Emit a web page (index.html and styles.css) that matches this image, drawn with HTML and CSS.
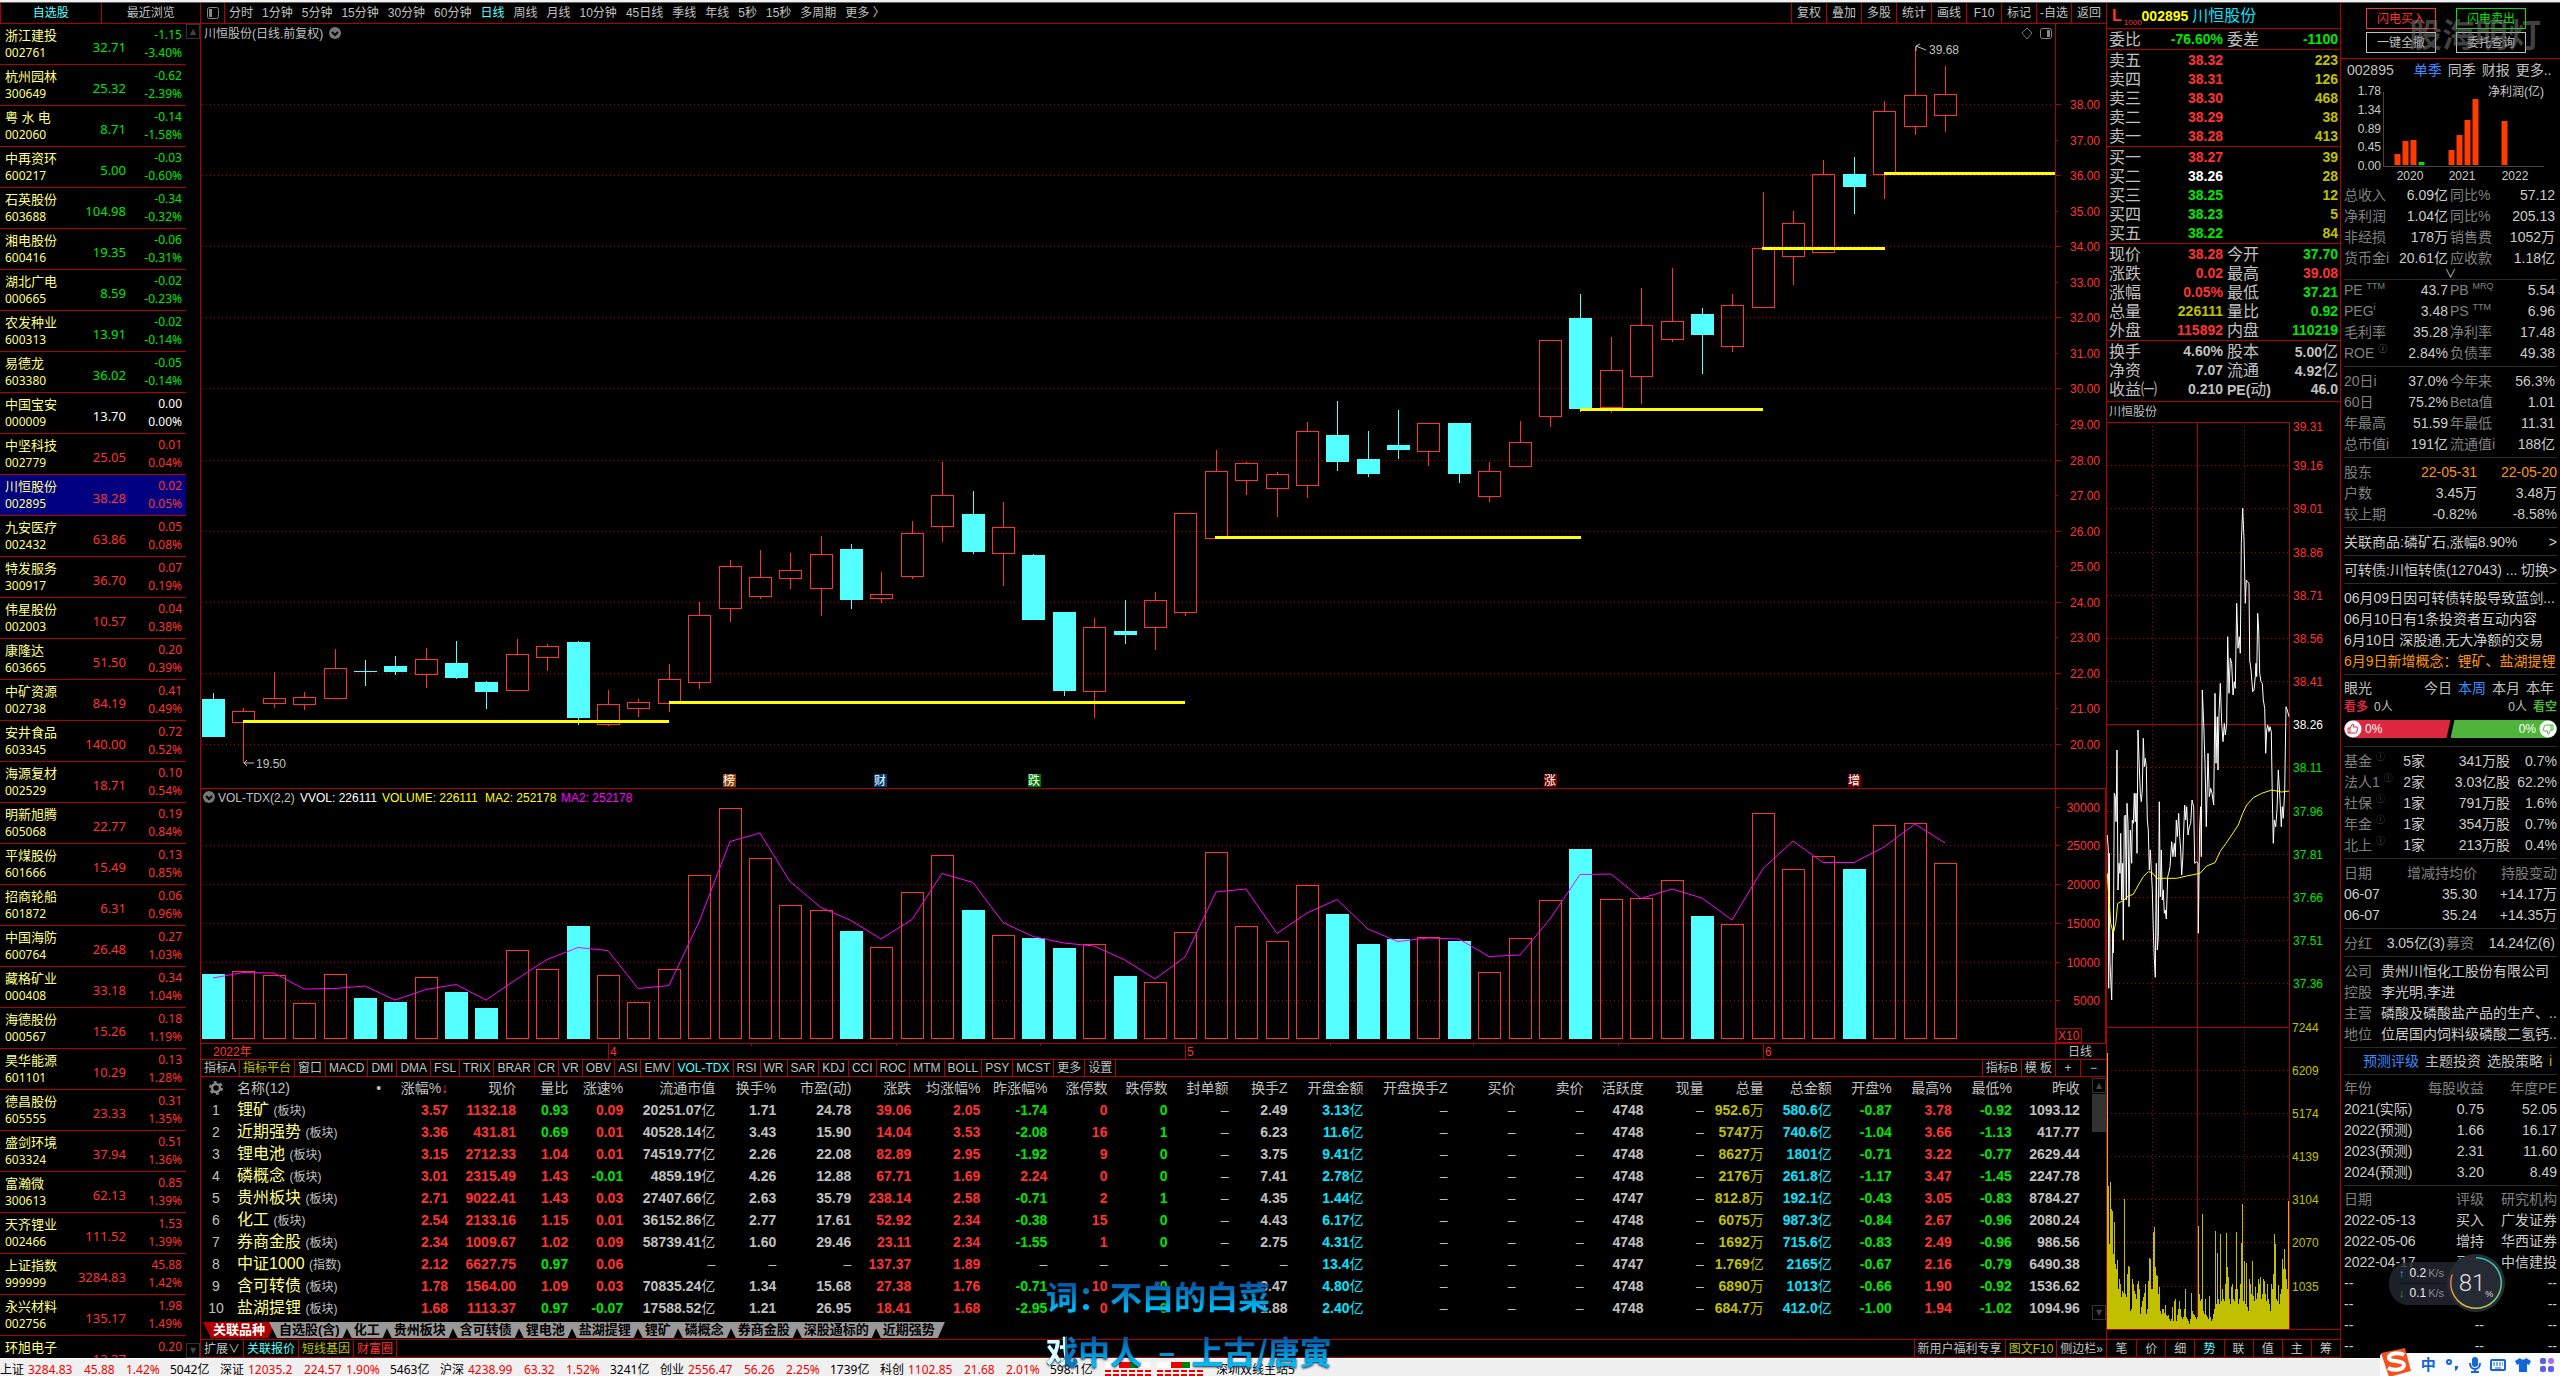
FILE: index.html
```html
<!DOCTYPE html>
<html lang="zh-CN">
<head>
<meta charset="utf-8">
<title>川恒股份 002895</title>
<link rel="stylesheet" href="styles.css">
</head>
<body>
<div class="strip"></div>
<main class="workspace">
  <aside class="watch">
    <nav class="watch-tabs"><button class="on">自选股</button><button>最近浏览</button></nav>
    <div class="watch-body">
      <ul class="watch-list" id="watch"></ul>
      <div class="scroller"><button aria-label="上">▲</button><button aria-label="下">▼</button></div>
    </div>
  </aside>

  <section class="center">
    <nav class="periods">
      <button class="fold" aria-label="侧栏"><svg width="14" height="14" viewBox="0 0 14 14"><rect x="1.500" y="1.500" width="11" height="11" rx="2" fill="none" stroke="#888"/><rect x="3" y="3" width="3" height="8" fill="#888"/></svg></button>
      <div class="period-list">
        <button>分时</button><button>1分钟</button><button>5分钟</button><button>15分钟</button><button>30分钟</button><button>60分钟</button><button class="on">日线</button><button>周线</button><button>月线</button><button>10分钟</button><button>45日线</button><button>季线</button><button>年线</button><button>5秒</button><button>15秒</button><button>多周期</button><button>更多 〉</button>
      </div>
      <div class="tools"><button>复权</button><button>叠加</button><button>多股</button><button>统计</button><button>画线</button><button>F10</button><button>标记</button><button>-自选</button><button>返回</button></div>
    </nav>

    <svg class="kline" id="kline" viewBox="201 24 1905 1035"></svg>

    <nav class="indicators">
      <button>指标A</button><button class="gold">指标平台</button><button>窗口</button><button>MACD</button><button>DMI</button><button>DMA</button><button>FSL</button><button>TRIX</button><button>BRAR</button><button>CR</button><button>VR</button><button>OBV</button><button>ASI</button><button>EMV</button><button class="on">VOL-TDX</button><button>RSI</button><button>WR</button><button>SAR</button><button>KDJ</button><button>CCI</button><button>ROC</button><button>MTM</button><button>BOLL</button><button>PSY</button><button>MCST</button><button>更多</button><button>设置</button>
      <span class="grow"></span>
      <button>指标B</button><button>模 板</button><button class="sign">+</button><button class="sign">−</button>
    </nav>

    <div class="related">
      <table class="grid" id="grid"></table>
      <div class="scroller wide"><button aria-label="上">▲</button><i></i><button aria-label="下">▼</button></div>
    </div>
    <nav class="groups">
      <button class="on">关联品种</button><button>自选股(含)</button><button>化工</button><button>贵州板块</button><button>含可转债</button><button>锂电池</button><button>盐湖提锂</button><button>锂矿</button><button>磷概念</button><button>券商金股</button><button>深股通标的</button><button>近期强势</button>
    </nav>
    <nav class="indicators ext">
      <button>扩展∨</button><button class="on">关联报价</button><button class="gold">短线基因</button><button class="hot">财富圈</button>
      <span class="grow"></span>
      <button>新用户福利专享</button><button class="gold">图文F10</button><button>侧边栏»</button>
    </nav>
  </section>

  <section class="quote">
    <header class="quote-head"><b class="lv">L</b><small>1000</small><b class="code">002895</b><span>川恒股份</span></header>
    <div id="book"></div>
    <h2 class="mini-title">川恒股份</h2>
    <svg class="intraday" id="intraday" viewBox="2107 422 233 917"></svg>
    <nav class="quote-tabs"><button>笔</button><button>价</button><button>细</button><button class="on">势</button><button>联</button><button>值</button><button>主</button><button>筹</button></nav>
  </section>

  <aside class="info">
    <div class="orders">
      <button class="buy">闪电买入</button><button class="sell">闪电卖出</button>
      <button>一键全撤</button><button>委托查询</button>
      <span class="watermark">股海明灯</span>
    </div>
    <nav class="fin-tabs"><span>002895</span><button class="on">单季</button><button>同季</button><button>财报</button><button>更多..</button></nav>
    <svg class="profit" id="profit" viewBox="2341 81 219 104"></svg>
    <section class="sec pairs first">
      <p><label>总收入</label><b>6.09亿</b><label>同比%</label><b>57.12</b></p>
      <p><label>净利润</label><b>1.04亿</b><label>同比%</label><b>205.13</b></p>
      <p><label>非经损</label><b>178万</b><label>销售费</label><b>1052万</b></p>
      <p><label>货币金i</label><b>20.61亿</b><label>应收款</label><b>1.18亿</b></p>
      <button class="unfold" aria-label="展开">∨</button>
    </section>
    <section class="sec pairs tight">
      <p><label>PE <sup>TTM</sup></label><b>43.7</b><label>PB <sup>MRQ</sup></label><b>5.54</b></p>
      <p><label>PEG<sup>i</sup></label><b>3.48</b><label>PS <sup>TTM</sup></label><b>6.96</b></p>
      <p><label>毛利率</label><b>35.28</b><label>净利率</label><b>17.48</b></p>
      <p><label>ROE <sup>ⓘ</sup></label><b>2.84%</b><label>负债率</label><b>49.38</b></p>
    </section>
    <section class="sec pairs">
      <p><label>20日i</label><b>37.0%</b><label>今年来</label><b>56.3%</b></p>
      <p><label>60日</label><b>75.2%</b><label>Beta值</label><b>1.01</b></p>
      <p><label>年最高</label><b>51.59</b><label>年最低</label><b>11.31</b></p>
      <p><label>总市值i</label><b>191亿</b><label>流通值i</label><b>188亿</b></p>
    </section>
    <section class="sec tri">
      <p><label>股东</label><b class="orange">22-05-31</b><b class="orange">22-05-20</b></p>
      <p><label>户数</label><b>3.45万</b><b>3.48万</b></p>
      <p><label>较上期</label><b>-0.82%</b><b>-8.58%</b></p>
    </section>
    <section class="sec"><a class="line" href="#"><span>关联商品:磷矿石,涨幅8.90%</span><i>&gt;</i></a></section>
    <section class="sec"><a class="line" href="#"><span>可转债:川恒转债(127043) ...</span><i>切换&gt;</i></a></section>
    <section class="sec">
      <a class="line" href="#"><span class="clip">06月09日因可转债转股导致蓝剑...</span></a>
      <a class="line" href="#"><span>06月10日有1条投资者互动内容</span></a>
      <a class="line" href="#"><span>6月10日 深股通,无大净额的交易</span></a>
      <a class="line orange" href="#"><span class="clip">6月9日新增概念：锂矿、盐湖提锂</span></a>
    </section>
    <section class="sec vote">
      <nav class="vote-tabs"><span>眼光</span><button>今日</button><button class="on">本周</button><button>本月</button><button>本年</button></nav>
      <div class="vote-n"><b class="up">看多</b><span>0人</span><span class="grow"></span><span>0人</span><b class="down">看空</b></div>
      <div class="vote-bar">
        <span class="bull"><svg width="18" height="18" viewBox="0 0 18 18"><circle cx="9" cy="9" r="8.500" fill="#fff"/><path d="M4 8h2v5H4zM6 8l2.500-4c1.500 0 1.200 1.500.8 3H13c1 0 1 1 .5 2l-1 3.500c-.2.500-.5.500-1 .5H6" fill="none" stroke="#dc2840"/></svg>0%</span>
        <span class="bear">0%<svg width="18" height="18" viewBox="0 0 18 18"><circle cx="9" cy="9" r="8.500" fill="#fff"/><path d="M14 10h-2V5h2zM12 10l-2.500 4c-1.500 0-1.200-1.500-.8-3H5c-1 0-1-1-.5-2l1-3.500c.2-.5.5-.5 1-.5H12" fill="none" stroke="#50b43c"/></svg></span>
      </div>
    </section>
    <section class="sec hold">
      <p><label>基金 <sup>ⓘ</sup></label><b>5家</b><b>341万股</b><b>0.7%</b></p>
      <p><label>法人1 <sup>ⓘ</sup></label><b>2家</b><b>3.03亿股</b><b>62.2%</b></p>
      <p><label>社保 <sup>ⓘ</sup></label><b>1家</b><b>791万股</b><b>1.6%</b></p>
      <p><label>年金 <sup>ⓘ</sup></label><b>1家</b><b>354万股</b><b>0.7%</b></p>
      <p><label>北上 <sup>ⓘ</sup></label><b>1家</b><b>213万股</b><b>0.4%</b></p>
    </section>
    <section class="sec tri">
      <p><label>日期</label><label>增减持均价</label><label>持股变动</label></p>
      <p><b class="l">06-07</b><b>35.30</b><b>+14.17万</b></p>
      <p><b class="l">06-07</b><b>35.24</b><b>+14.35万</b></p>
    </section>
    <section class="sec bonus">
      <p><label>分红</label><b>3.05亿(3)</b><label>募资</label><b>14.24亿(6)</b></p>
    </section>
    <section class="sec corp">
      <p><label>公司</label><span>贵州川恒化工股份有限公司</span></p>
      <p><label>控股</label><span>李光明,李进</span></p>
      <p><label>主营</label><span>磷酸及磷酸盐产品的生产、..</span></p>
      <p><label>地位</label><span>位居国内饲料级磷酸二氢钙..</span></p>
    </section>
    <section class="sec close"><nav class="rate-tabs"><button class="on">预测评级</button><button>主题投资</button><button>选股策略</button><i>i</i></nav></section>
    <section class="sec close tri eps">
      <p><label>年份</label><label>每股收益</label><label>年度PE</label></p>
      <p><b class="l">2021(实际)</b><b>0.75</b><b>52.05</b></p>
      <p><b class="l">2022(预测)</b><b>1.66</b><b>16.17</b></p>
      <p><b class="l">2023(预测)</b><b>2.31</b><b>11.60</b></p>
      <p><b class="l">2024(预测)</b><b>3.20</b><b>8.49</b></p>
    </section>
    <section class="sec tri eps last">
      <p><label>日期</label><label>评级</label><label>研究机构</label></p>
      <p><b class="l">2022-05-13</b><b>买入</b><b>广发证券</b></p>
      <p><b class="l">2022-05-06</b><b>增持</b><b>华西证券</b></p>
      <p><b class="l">2022-04-17</b><b>买入</b><b>中信建投</b></p>
      <p><b class="l">--</b><b>--</b><b>--</b></p>
      <p><b class="l">--</b><b>--</b><b>--</b></p>
      <p><b class="l">--</b><b>--</b><b>--</b></p>
      <p><b class="l">--</b><b>--</b><b>--</b></p>
    </section>
  </aside>
</main>

<footer class="status" id="status"></footer>

<div class="lyrics"><p>词：不白的白菜</p><p><span class="sung">戏</span>中人&ensp;–&ensp;上古/唐寅</p></div>

<div class="speed">
  <div class="rates"><p><i class="u">↑</i><b>0.2</b>K/s</p><p><i class="d">↓</i><b>0.1</b>K/s</p></div>
  <div class="ball"><div><span>81</span><small>%</small></div></div>
</div>

<div class="ime">
  <svg class="sogou" width="32" height="28" viewBox="0 0 32 28"><path d="M1 5L25 0l6 23-22 6z" fill="#f4511e"/><path d="M24 7c-5-3-15-2-15 3 0 4 15 2 15 7 0 5-11 6-16 3" fill="none" stroke="#fff" stroke-width="4"/></svg>
  <b>中</b>
  <svg width="14" height="14" viewBox="0 0 14 14"><circle cx="4" cy="4" r="2" fill="none" stroke="#1565d8" stroke-width="2"/><path d="M10 8h3c0 3-1 4-3 5z" fill="#1565d8"/></svg>
  <svg width="14" height="16" viewBox="0 0 14 16"><rect x="4" y="0" width="6" height="10" rx="3" fill="#1565d8"/><path d="M2 6c0 8 10 8 10 0M7 12v3M3 15h8" fill="none" stroke="#1565d8" stroke-width="2"/></svg>
  <svg width="16" height="14" viewBox="0 0 16 14"><rect x="1" y="2" width="14" height="10" rx="1" fill="none" stroke="#1565d8" stroke-width="2"/><path d="M3 5h10M3 7h10" stroke="#1565d8" stroke-dasharray="2 1"/><path d="M5 10h6" stroke="#1565d8"/></svg>
  <svg width="16" height="14" viewBox="0 0 16 14"><path d="M5 0c1 2 5 2 6 0l5 3-2 4-2-1v8H4V6L2 7 0 3z" fill="#1565d8"/></svg>
  <svg width="14" height="14" viewBox="0 0 14 14"><g fill="#5b5fe8"><rect width="6" height="6" rx="2"/><rect y="8" width="6" height="6" rx="2"/><rect x="8" y="8" width="6" height="6" rx="2"/></g><circle cx="11" cy="3" r="3" fill="#a26bf0"/></svg>
</div>
<script src="app.js"></script>
</body>
</html>
```
FILE: styles.css
```css
:root {
  --line: #b00000;
  --red: #ff3232;
  --green: #00e600;
  --cyan: #54ffff;
  --aqua: #00e6ff;
  --text: #c0c0c0;
  --gold: #c0c000;
}
* { box-sizing: border-box; }
body {
  margin: 0;
  height: 100vh;
  display: flex;
  flex-direction: column;
  overflow: hidden;
  background: #000;
  color: var(--text);
  font: 12px/16px "Liberation Sans", "Noto Sans CJK SC", sans-serif;
}
button { margin: 0; padding: 0; border: 0; background: none; color: inherit; font: inherit; white-space: nowrap; }
p, ul, h2 { margin: 0; padding: 0; font: inherit; list-style: none; }
i { font-style: normal; }
.grow { flex: 1; }
.on { color: var(--cyan); }
.gold { color: var(--gold); }
.hot, .red { color: var(--red); }
.green { color: var(--green); }
.white { color: #fff; }
.aqua { color: var(--aqua); }
.orange { color: #ff9600; }

.strip { height: 3px; background: #f0f0f0; border-bottom: 1px solid #666; flex: none; }
.workspace { flex: 1; min-height: 0; display: flex; }

/* watch list */
.watch { width: 201px; flex: none; border-right: 1px solid var(--line); display: flex; flex-direction: column; }
.watch-tabs { height: 21px; flex: none; display: grid; grid-template-columns: 1fr 1fr; border-bottom: 1px solid var(--line); border-left: 1px solid var(--line); }
.watch-tabs button + button { border-left: 1px solid var(--line); }
.watch-body { flex: 1; min-height: 0; display: flex; }
.watch-list { flex: 1; overflow: hidden; font: 12px/18px "Noto Sans", "Noto Sans CJK SC", sans-serif; }
.watch-list li { height: 41px; display: grid; grid-template-columns: 60px 1fr 56px; padding: 2px 4px 2px 5px; border-bottom: 1px solid var(--line); text-align: right; }
.watch-list li.sel { background: #000080; }
.watch-list .n { color: #ffff84; text-align: left; }
.watch-list .n b { font-weight: 400; font-size: 13px; white-space: pre; }
.watch-list span { display: flex; flex-direction: column; }
.watch-list .p { font-size: 13px; line-height: 42px; }
.scroller { width: 14px; flex: none; display: flex; flex-direction: column; justify-content: space-between; }
.scroller button { height: 15px; border: 1px solid #333; color: #444; font: 8px/12px "DejaVu Sans", sans-serif; }

/* toolbar */
.center { flex: 1; min-width: 0; display: flex; flex-direction: column; overflow: hidden; }
.periods { height: 21px; flex: none; display: flex; border-bottom: 1px solid var(--line); }
.fold { width: 24px; border-right: 1px solid var(--line); display: grid; place-items: center; }
.period-list { flex: 1; display: flex; gap: 9px; padding-left: 4px; }
.tools { display: flex; }
.tools button { width: 35px; border-left: 1px solid var(--line); }
.kline { display: block; width: 100%; flex: none; }
svg text { fill: var(--text); }

.indicators { height: 18px; flex: none; display: flex; border-top: 1px solid var(--line); border-bottom: 1px solid var(--line); }
.indicators button { padding: 0 3px; border-right: 1px solid var(--line); }
.indicators .grow { border-right: 1px solid var(--line); }
.indicators .sign { width: 25px; }
.indicators button:last-child { border-right: 0; }
.ext { height: 19px; }

/* related instruments */
.related { flex: 1; min-height: 0; display: flex; padding-bottom: 2px; }
.grid { flex: 1; width: 100%; table-layout: fixed; border-collapse: collapse; align-self: flex-start; white-space: nowrap; }
.grid tr { height: 22px; }
.grid th, .grid td { padding: 0; text-align: right; font-size: 14px; line-height: 20px; overflow: visible; }
.grid th { font-weight: 400; }
.grid td { font-weight: 700; }
.grid td i { font-weight: 400; }
.grid .idx { text-align: center; font-weight: 400; }
.grid .idx svg { display: block; margin: 0 auto; }
.grid .name { text-align: left; padding-left: 6px; }
.grid td.name { color: #ffff84; font-weight: 400; font-size: 16px; }
.grid .name small { color: var(--text); font-size: 12px; }
.grid .name em { float: right; font-style: normal; }
.scroller.wide { justify-content: flex-start; padding-top: 1px; }
.scroller.wide i { height: 38px; margin-top: 1px; background: #323232; }
.scroller.wide button:last-child { margin-top: auto; }

.groups { height: 17px; flex: none; display: flex; padding-left: 2px; }
.groups button { padding: 0 10px; margin-right: -6px; height: 16px; background: #989898; color: #000; font-size: 13px; font-weight: 700; clip-path: polygon(0 0, 100% 0, calc(100% - 7px) 100%, 8px 100%); }
.groups .on { background: #b00000; color: #fff; }

/* order book */
.quote { width: 235px; flex: none; border-left: 1px solid var(--line); border-right: 1px solid var(--line); display: flex; flex-direction: column; overflow: hidden; }
.quote-head { height: 26px; flex: none; display: flex; align-items: center; padding-left: 5px; border-bottom: 1px solid var(--line); font-size: 16px; color: var(--aqua); }
.quote-head .lv { color: var(--red); }
.quote-head small { color: var(--red); font-size: 8px; align-self: flex-end; line-height: 10px; margin-left: 2px; }
.quote-head .code { color: #ff0; font-size: 14px; margin-right: 4px; }
.book { padding: 1px 2px 0; border-bottom: 1px solid var(--line); }
.book.roomy { padding-bottom: 2px; }
.book p { display: grid; grid-template-columns: 48px 66px 1fr 1fr; height: 19px; font-size: 16px; line-height: 19px; white-space: nowrap; }
.book b { text-align: right; font-size: 14px; }
.book b i { font-weight: 400; font-size: 16px; }
.book label + b + label { padding-left: 4px; }
.mini-title { height: 20px; flex: none; padding: 2px; }
.intraday { display: block; width: 100%; flex: none; }
.quote-tabs { flex: 1; display: grid; grid-template-columns: repeat(8, 1fr); border-top: 1px solid var(--line); border-bottom: 1px solid var(--line); }
.quote-tabs button + button { border-left: 1px solid var(--line); }

/* company info */
.info { width: 219px; flex: none; overflow: hidden; font-size: 14px; line-height: 21px; }
.info .on { color: #3c8cff; }
.orders { position: relative; display: grid; grid-template-columns: 70px 70px; gap: 3px 20px; padding: 5px 0 5px 25px; border-bottom: 1px solid var(--line); font-size: 12px; }
.orders button { height: 21px; border: 1px solid currentColor; line-height: 18px; }
.buy { color: var(--red); }
.sell { color: var(--green); }
.watermark { position: absolute; left: 68px; top: 14px; font-size: 33px; line-height: 38px; font-weight: 700; color: rgb(130 130 130 / 50%); }
.fin-tabs { display: flex; gap: 6px; padding: 1px 0 0 6px; white-space: nowrap; }
.fin-tabs span { margin-right: 14px; }
.profit { display: block; width: 100%; }
.sec { margin: 0 3px; padding: 4px 0 2px; border-bottom: 1px solid #2c2c2c; white-space: nowrap; }
.sec.first { padding: 0; }
.sec.tight { padding-top: 0; }
.sec.close { padding: 3px 0 2px; }
.sec.last { border: 0; padding-top: 3px; }
.sec p { display: grid; height: 21px; }
.sec b { font-weight: 400; text-align: right; color: #ccc; }
.sec b.l { text-align: left; }
.sec b.orange { color: #ff9600; }
.sec label { color: #808080; }
.sec sup { font-size: 9px; line-height: 9px; }
.pairs p { grid-template-columns: 50px 52px 49px 1fr; column-gap: 2px; padding-right: 2px; }
.unfold { display: block; margin: 0 auto; font-size: 12px; line-height: 10px; height: 10px; }
.tri p { grid-template-columns: 48px 85px 1fr; }
.tri label + label { text-align: right; }
.eps p { grid-template-columns: 76px 64px 1fr; }
.line { display: flex; justify-content: space-between; color: #ccc; text-decoration: none; height: 21px; }
.line.orange { color: #ff9600; }
.line span { overflow: hidden; text-overflow: ellipsis; }
.line .clip { text-overflow: clip; }
.line i { flex: none; }
.vote-tabs { display: flex; gap: 6px; padding-right: 3px; }
.vote-tabs span { flex: 1; }
.vote-n { display: flex; gap: 6px; font-size: 12px; line-height: 16px; height: 21px; }
.vote-n .up { color: #dc2840; font-weight: 700; }
.vote-n .down { color: #50b43c; font-weight: 700; }
.vote-bar { display: flex; font-size: 12px; color: #fff; line-height: 18px; margin-bottom: 6px; }
.vote-bar span { flex: 1; display: flex; gap: 3px; height: 18px; }
.vote-bar .bull { background: #dc2840; border-radius: 9px 0 0 9px; clip-path: polygon(0 0, 100% 0, calc(100% - 4px) 100%, 0 100%); }
.vote-bar .bear { background: #50b43c; border-radius: 0 9px 9px 0; justify-content: flex-end; clip-path: polygon(4px 0, 100% 0, 100% 100%, 0 100%); }
.vote { padding-top: 3px; }
.hold p { grid-template-columns: 54px 27px 1fr 47px; }
.hold sup { color: #555; }
.bonus p { grid-template-columns: 28px 72px 1fr 80px; column-gap: 1px; padding-right: 2px; }
.corp p { grid-template-columns: 37px 1fr; }
.corp span { overflow: hidden; color: #ccc; }
.rate-tabs { display: flex; gap: 6px; padding-left: 19px; }
.rate-tabs i { color: var(--gold); }

/* status bar */
.status { height: 18px; flex: none; display: flex; background: #f0f0f0; border-top: 1px solid #fff; color: #000; font: 12px/22px "Noto Sans", "Noto Sans CJK SC", sans-serif; white-space: nowrap; overflow: hidden; }
.status .mk { display: grid; grid-template-columns: 28px 56px 42px 44px 50px; }
.status .mk .r { color: #f00000; }
.status .site { margin-left: 12px; }
.status svg { margin-left: 4px; }

/* floating windows */
.lyrics { position: absolute; left: 1046px; bottom: 0; font: 700 32px/56px "Noto Sans CJK SC", sans-serif; white-space: pre; filter: drop-shadow(0 1px 1px #001830); pointer-events: none; }
.lyrics p { background: linear-gradient(#0a50a0 25%, #00b8f4 75%); background-clip: text; -webkit-background-clip: text; color: transparent; line-height: 52px; }
.lyrics p + p { margin-top: 3px; }
.sung { background: linear-gradient(90deg, #dff 60%, #0878c0 60%); background-clip: text; -webkit-background-clip: text; }
.speed { position: absolute; right: 55px; bottom: 64px; display: flex; align-items: center; pointer-events: none; }
.rates { width: 80px; margin-right: -22px; padding: 2px 0 2px 10px; border-radius: 20px 0 0 20px; background: rgb(36 40 50 / 80%); color: #888; font-size: 11px; line-height: 19px; }
.rates p + p { border-top: 1px solid #14161c; }
.rates b { color: #eee; margin: 0 2px 0 5px; font-size: 12px; font-weight: 400; }
.rates .u { color: #30a8e8; }
.rates .d { color: #20b030; }
.ball { width: 58px; height: 58px; padding: 3px; border-radius: 50%; background: #262a34; }
.ball div { width: 52px; height: 52px; border-radius: 50%; display: flex; align-items: center; justify-content: center; background: radial-gradient(#262a34 24px, transparent 25px), conic-gradient(#30c8b8, #50d898 25%, #e0d040 55%, #f07840 80%, #262a34 81%); color: #ddd; }
.ball span { font: 300 24px/48px Roboto, sans-serif; }
.ball small { font-size: 9px; align-self: flex-end; line-height: 30px; }
.ime { position: absolute; right: 0; bottom: 0; height: 23px; display: flex; align-items: center; justify-content: space-between; width: 180px; padding-right: 6px; background: #f8fbff; border-radius: 4px 0 0 0; }
.ime b { color: #1565d8; font-size: 15px; }
.sogou { margin-top: -5px; }
```
FILE: app.js
```js
const NS = 'http://www.w3.org/2000/svg';
const RED = '#ff3232', LINE = '#b00000', CYAN = '#54ffff';

function el(svg, tag, attrs, text) {
  const n = document.createElementNS(NS, tag);
  for (const k in attrs) n.setAttribute(k, attrs[k]);
  if (text !== undefined) n.textContent = text;
  svg.append(n);
  return n;
}
const seg = (s, x1, y1, x2, y2, c = LINE, w = 1, dash) =>
  el(s, 'path', { d: `M${x1} ${y1}L${x2} ${y2}`, stroke: c, 'stroke-width': w, fill: 'none', 'shape-rendering': 'crispEdges', ...(dash ? { 'stroke-dasharray': dash } : {}) });
const label = (s, x, y, t, c, size = 12, anchor = 'start') =>
  el(s, 'text', { x, y, 'font-size': size, 'text-anchor': anchor, style: `fill:${c}` }, t);

/* watch list: name, code, price, change, percent */
const watch = `浙江建投,002761,32.71,-1.15,-3.40%
杭州园林,300649,25.32,-0.62,-2.39%
粤 水 电,002060,8.71,-0.14,-1.58%
中再资环,600217,5.00,-0.03,-0.60%
石英股份,603688,104.98,-0.34,-0.32%
湘电股份,600416,19.35,-0.06,-0.31%
湖北广电,000665,8.59,-0.02,-0.23%
农发种业,600313,13.91,-0.02,-0.14%
易德龙,603380,36.02,-0.05,-0.14%
中国宝安,000009,13.70,0.00,0.00%
中坚科技,002779,25.05,0.01,0.04%
川恒股份,002895,38.28,0.02,0.05%
九安医疗,002432,63.86,0.05,0.08%
特发服务,300917,36.70,0.07,0.19%
伟星股份,002003,10.57,0.04,0.38%
康隆达,603665,51.50,0.20,0.39%
中矿资源,002738,84.19,0.41,0.49%
安井食品,603345,140.00,0.72,0.52%
海源复材,002529,18.71,0.10,0.54%
明新旭腾,605068,22.77,0.19,0.84%
平煤股份,601666,15.49,0.13,0.85%
招商轮船,601872,6.31,0.06,0.96%
中国海防,600764,26.48,0.27,1.03%
藏格矿业,000408,33.18,0.34,1.04%
海德股份,000567,15.26,0.18,1.19%
昊华能源,601101,10.29,0.13,1.28%
德昌股份,605555,23.33,0.31,1.35%
盛剑环境,603324,37.94,0.51,1.36%
富瀚微,300613,62.13,0.85,1.39%
天齐锂业,002466,111.52,1.53,1.39%
上证指数,999999,3284.83,45.88,1.42%
永兴材料,002756,135.17,1.98,1.49%
环旭电子,601231,13.37,0.20,1.52%`.split('\n').map(r => r.split(','));
document.getElementById('watch').innerHTML = watch.map(([n, c, p, d, r]) => {
  const cls = +d < 0 ? 'green' : +d > 0 ? 'red' : 'white';
  return `<li class="${cls}${c === '002895' ? ' sel' : ''}"><span class="n"><b>${n}</b>${c}</span><span class="p">${p}</span><span><i>${d}</i><i>${r}</i></span></li>`;
}).join('');

/* related instruments */
const heads = '名称(12)|涨幅%|现价|量比|涨速%|流通市值|换手%|市盈(动)|涨跌|均涨幅%|昨涨幅%|涨停数|跌停数|封单额|换手Z|开盘金额|开盘换手Z|买价|卖价|活跃度|现量|总量|总金额|开盘%|最高%|最低%|昨收'.split('|');
const widths = [30, 150, 67, 68, 52, 55, 92, 61, 75, 60, 69, 67, 60, 60, 61, 59, 76, 84, 68, 68, 60, 60, 60, 68, 60, 60, 60, 68, 12];
const rows = `锂矿 (板块)|3.57|1132.18|0.93|0.09|20251.07亿|1.71|24.78|39.06|2.05|-1.74|0|0|–|2.49|3.13亿|–|–|–|4748|–|952.6万|580.6亿|-0.87|3.78|-0.92|1093.12
近期强势 (板块)|3.36|431.81|0.69|0.01|40528.14亿|3.43|15.90|14.04|3.53|-2.08|16|1|–|6.23|11.6亿|–|–|–|4748|–|5747万|740.6亿|-1.04|3.66|-1.13|417.77
锂电池 (板块)|3.15|2712.33|1.04|0.01|74519.77亿|2.26|22.08|82.89|2.95|-1.92|9|0|–|3.75|9.41亿|–|–|–|4748|–|8627万|1801亿|-0.71|3.22|-0.77|2629.44
磷概念 (板块)|3.01|2315.49|1.43|-0.01|4859.19亿|4.26|12.88|67.71|1.69|2.24|0|0|–|7.41|2.78亿|–|–|–|4748|–|2176万|261.8亿|-1.17|3.47|-1.45|2247.78
贵州板块 (板块)|2.71|9022.41|1.43|0.03|27407.66亿|2.63|35.79|238.14|2.58|-0.71|2|1|–|4.35|1.44亿|–|–|–|4747|–|812.8万|192.1亿|-0.43|3.05|-0.83|8784.27
化工 (板块)|2.54|2133.16|1.15|0.01|36152.86亿|2.77|17.61|52.92|2.34|-0.38|15|0|–|4.43|6.17亿|–|–|–|4748|–|6075万|987.3亿|-0.84|2.67|-0.96|2080.24
券商金股 (板块)|2.34|1009.67|1.02|0.09|58739.41亿|1.60|29.46|23.11|2.34|-1.55|1|0|–|2.75|4.31亿|–|–|–|4748|–|1692万|715.6亿|-0.83|2.49|-0.96|986.56
中证1000 (指数)|2.12|6627.75|0.97|0.06|–|–|–|137.37|1.89|–|–|–|–|–|13.4亿|–|–|–|4747|–|1.769亿|2165亿|-0.67|2.16|-0.79|6490.38
含可转债 (板块)|1.78|1564.00|1.09|0.03|70835.24亿|1.34|15.68|27.38|1.76|-0.71|10|0|–|3.47|4.80亿|–|–|–|4748|–|6890万|1013亿|-0.66|1.90|-0.92|1536.62
盐湖提锂 (板块)|1.68|1113.37|0.97|-0.07|17588.52亿|1.21|26.95|18.41|1.68|-2.95|0|0|–|1.88|2.40亿|–|–|–|4748|–|684.7万|412.0亿|-1.00|1.94|-1.02|1094.96`.split('\n').map(r => r.split('|'));
const signed = [1, 4, 8, 9, 10, 23, 24, 25];
function tone(i, v) {
  if (v === '–') return '';
  if (signed.includes(i)) return v[0] === '-' ? 'green' : 'red';
  if (i === 2 || i === 11) return 'red';
  if (i === 3) return +v < 1 ? 'green' : 'red';
  if (i === 12) return 'green';
  if (i === 15 || i === 22) return 'aqua';
  return i === 21 ? 'gold' : '';
}
const gear = '<svg width="14" height="14" viewBox="0 0 14 14"><circle cx="7" cy="7" r="4" fill="none" stroke="#888" stroke-width="2.500"/><circle cx="7" cy="7" r="6" fill="none" stroke="#888" stroke-width="2" stroke-dasharray="3 3.280"/></svg>';
document.getElementById('grid').innerHTML =
  `<colgroup>${widths.map(w => `<col style="width:${w}px">`).join('')}</colgroup><thead><tr><th class="idx">${gear}</th>` +
  heads.map((h, i) => `<th class="${i ? '' : 'name'}">${h}${i ? '' : '<em>•</em>'}${i === 1 ? '<span class="red">↓</span>' : ''}</th>`).join('') +
  '<th></th></tr></thead><tbody>' +
  rows.map((r, n) => `<tr><td class="idx">${n + 1}</td>` + r.map((v, i) => i
    ? `<td class="${tone(i, v)}">${v.replace(/[亿万–]/, '<i>$&</i>')}</td>`
    : `<td class="name">${v.replace(/\(.*\)/, '<small>$&</small>')}</td>`).join('') + '<td></td></tr>').join('') + '</tbody>';

/* order book */
const book = [
  [['委比', '-76.60%', 'green', '委差', '-1100', 'green']],
  [['卖五', '38.32', 'red', '', '223', 'gold'], ['卖四', '38.31', 'red', '', '126', 'gold'], ['卖三', '38.30', 'red', '', '468', 'gold'], ['卖二', '38.29', 'red', '', '38', 'gold'], ['卖一', '38.28', 'red', '', '413', 'gold']],
  [['买一', '38.27', 'red', '', '39', 'gold'], ['买二', '38.26', 'white', '', '28', 'gold'], ['买三', '38.25', 'green', '', '12', 'gold'], ['买四', '38.23', 'green', '', '5', 'gold'], ['买五', '38.22', 'green', '', '84', 'gold']],
  [['现价', '38.28', 'red', '今开', '37.70', 'green'], ['涨跌', '0.02', 'red', '最高', '39.08', 'red'], ['涨幅', '0.05%', 'red', '最低', '37.21', 'green'], ['总量', '226111', 'gold', '量比', '0.92', 'green'], ['外盘', '115892', 'red', '内盘', '110219', 'green']],
  [['换手', '4.60%', '', '股本', '5.00亿', ''], ['净资', '7.07', '', '流通', '4.92亿', ''], ['收益㈠', '0.210', '', '<b>PE(</b>动<b>)</b>', '46.0', '']]
];
document.getElementById('book').innerHTML = book.map((g, n) => `<div class="book${n === 4 ? ' roomy' : ''}">` + g.map(r =>
  `<p><label>${r[0]}</label><b class="${r[2]}">${r[1]}</b><label>${r[3]}</label><b class="${r[5]}">${r[4].replace('亿', '<i>亿</i>')}</b></p>`).join('') + '</div>').join('');

/* daily candles: fall flag, high, body top, body bottom, low, volume top */
const K = [[1,693,699,737,737,974],[0,708,711,722,763,971],[0,672,698,703,708,975],[0,692,697,704,710,1003],[0,649,668,698,698,974],[1,660,671,672,686,998],[1,656,666,672,675,1002],[0,648,659,674,688,977],[1,641,663,678,679,992],[1,681,682,692,709,1008],[0,639,654,690,691,950],[0,644,646,657,671,969],[1,641,642,718,725,926],[0,690,704,724,726,975],[0,699,702,708,717,1002],[0,664,679,703,712,969],[0,602,615,682,689,875],[0,560,566,608,622,808],[0,550,577,596,599,858],[0,553,570,578,589,905],[0,536,554,588,616,910],[1,544,549,600,609,931],[0,572,594,598,603,947],[0,521,533,576,579,892],[0,462,495,526,542,855],[1,491,514,552,554,910],[0,502,527,553,586,935],[1,554,555,620,620,938],[1,612,612,691,696,948],[0,618,627,691,718,944],[1,600,631,635,644,976],[0,592,600,627,650,982],[0,513,513,612,616,932],[0,450,471,538,538,852],[0,462,463,480,495,926],[0,472,474,488,517,941],[0,422,431,485,498,885],[1,401,435,462,471,914],[1,431,459,474,477,944],[1,410,445,450,459,939],[0,423,423,451,466,937],[1,423,423,474,483,941],[0,462,471,496,502,972],[0,421,442,466,466,938],[0,340,340,416,427,900],[1,294,318,409,412,849],[0,337,370,407,413,899],[0,288,325,376,404,898],[0,268,321,339,342,880],[1,308,314,335,374,916],[0,294,305,346,352,924],[0,192,248,307,307,813],[0,211,223,256,285,869],[0,160,174,252,252,856],[1,157,174,187,214,869],[0,101,111,174,199,825],[0,47,95,126,135,823],[0,66,94,115,132,863]];
const cx = i => Math.round(213 + i * 30.386);
const k = document.getElementById('kline');

for (let p = 20; p <= 38; p++) {
  const y = Math.round(104 + (38 - p) * 35.55) + .5;
  if (p % 2 === 0) seg(k, 202, y, 2054, y, LINE, 1, '1 3');
  seg(k, 2055, y, p % 2 ? 2058 : 2061, y);
  label(k, 2070, y + 4, p.toFixed(2), RED);
}
for (let v = 1; v <= 6; v++) {
  const y = Math.round(1039 - v * 38.75) + .5;
  if (v < 6) seg(k, 202, y, 2054, y, LINE, 1, '1 3');
  seg(k, 2055, y, 2060, y);
  label(k, 2100, y + 4, String(v * 5000), RED, 12, 'end');
}
K.forEach(([fall, hi, top, bot, lo, vt], i) => {
  const x = cx(i), c = fall ? CYAN : RED;
  const box = (y, h) => el(k, 'rect', fall
    ? { x: x - 11, y, width: 23, height: Math.max(h, 1), fill: CYAN }
    : { x: x - 10.5, y: y + .5, width: 22, height: Math.max(h, 1), fill: 'none', stroke: RED, 'shape-rendering': 'crispEdges' });
  if (hi < top) seg(k, x + .5, hi, x + .5, top, c);
  if (lo > bot) seg(k, x + .5, bot, x + .5, lo, c);
  box(top, bot - top);
  box(vt, 1039 - vt - (fall ? 0 : 1));
});
el(k, 'polyline', { points: K.map((r, i) => `${cx(i)},${i ? (r[5] + K[i - 1][5]) / 2 : 978}`).join(' '), fill: 'none', stroke: '#ff00ff' });
[[243, 669, 721], [669, 1185, 702], [1215, 1581, 537], [1580, 1763, 409], [1762, 1885, 248], [1884, 2055, 173]].forEach(([a, b, y]) => seg(k, a, y + .5, b, y + .5, '#ffff00', 3));
seg(k, 2055.5, 24, 2055.5, 1059);
seg(k, 201, 788.5, 2106, 788.5);
seg(k, 201, 1043.5, 2106, 1043.5);
seg(k, 2105.5, 789, 2105.5, 1043);
[[608, '4'], [1185, '5'], [1763, '6']].forEach(([x, t]) => { seg(k, x + .5, 1043, x + .5, 1059); label(k, x + 2, 1056, t, RED); });
[751, 896, 1040, 1330, 1473, 1618].forEach(x => seg(k, x + .5, 1043, x + .5, 1046));
label(k, 213, 1056, '2022年', RED);
label(k, 2068, 1056, '日线', '#c0c0c0');
el(k, 'rect', { x: 2056.5, y: 1028.5, width: 25, height: 14, fill: 'none', stroke: LINE });
label(k, 2058, 1040, 'X10', RED);
[['榜', 729, '#904000'], ['财', 880, '#003c78'], ['跌', 1034, '#007800'], ['涨', 1550, '#780000'], ['增', 1854, '#780000']].forEach(([t, x, c]) => {
  el(k, 'rect', { x: x - 6, y: 774, width: 13, height: 13, fill: c });
  label(k, x, 785, t, '#fff', 12, 'middle');
});
el(k, 'path', { d: 'M244 763h10M244 763l3-3M244 763l3 3M1916 46l10 4M1916 46l0 5M1916 46l4-2', stroke: '#c0c0c0', fill: 'none' });
label(k, 256, 768, '19.50', '#c0c0c0');
label(k, 1929, 54, '39.68', '#c0c0c0');
const knob = (x, y) => { el(k, 'circle', { cx: x, cy: y, r: 6, fill: '#777' }); el(k, 'path', { d: `M${x - 3} ${y - 1}l3 3 3-3`, stroke: '#000', fill: 'none', 'stroke-width': 2 }); };
label(k, 204, 38, '川恒股份(日线.前复权)', '#c0c0c0');
knob(335, 33);
knob(209, 797);
label(k, 218, 802, 'VOL-TDX(2,2)', '#c0c0c0');
label(k, 300, 802, 'VVOL: 226111', '#fff');
label(k, 382, 802, 'VOLUME: 226111', '#ff0');
label(k, 485, 802, 'MA2: 252178', '#ff0');
label(k, 561, 802, 'MA2: 252178', '#f0f');
el(k, 'path', { d: 'M2027 28l5 5-5 6-5-6z', fill: 'none', stroke: '#777' });
el(k, 'rect', { x: 2040.5, y: 28.5, width: 11, height: 10, rx: 2, fill: 'none', stroke: '#888' });
el(k, 'rect', { x: 2047, y: 30, width: 3, height: 7, fill: '#888' });

/* intraday */
const d = document.getElementById('intraday');
for (let i = 0; i <= 21; i++) {
  const y = Math.round(422 + i * 43.18) + .5;
  const solid = i === 0 || i === 7 || i === 14 || i === 21;
  seg(d, 2107, y, i === 21 ? 2340 : 2289, y, LINE, 1, solid ? '' : '1 3');
  if (i === 21) continue;
  if (i < 14) label(d, 2293, y + (i ? 4 : 8), (39.31 - i * .15).toFixed(2), i < 7 ? RED : i > 7 ? '#00e600' : '#fff');
  else label(d, 2292, y + 4, ['7244', '6209', '5174', '4139', '3104', '2070', '1035'][i - 14], '#c0c000');
}
[2152, 2197, 2244, 2289].forEach((x, i) => seg(d, x + .5, 422, x + .5, 1329, LINE, 1, i % 2 ? '' : '1 3'));
const price = '22,1215 25,1260 26,1675 28,1270 30,1600 35,1710 38,1500 40,1569 43,1090 46,1100 48,1175 51,960 54,1380 57,1300 60,1330 62,1210 65,1410 68,1300 70,1530 73,1160 76,1155 79,1410 81,1120 84,1180 87,1430 91,1200 95,1300 97,1170 100,1180 103,1090 106,1175 108,1090 111,1270 114,900 118,1010 121,1090 124,1115 127,1080 130,925 133,1010 136,985 139,1010 142,1170 145,1200 148,1320 151,1260 154,1320 157,1380 160,1500 163,1585 166,1642 169,1300 172,1560 175,1520 178,1115 181,1400 184,1260 187,1410 190,1380 193,1450 196,1440 199,1467 203,1340 206,1330 210,1310 215,1235 219,1280 223,1240 226,1280 229,1170 232,1220 236,1150 239,1220 242,1260 245,1335 248,1290 251,1200 254,1125 257,1170 260,1130 264,1215 268,1190 272,1180 276,1110 281,1130 284,1300 290,1295 294,1300 295,1510 299,1190 302,1130 304,1280 307,780 311,880 315,1000 319,1190 324,970 328,1100 332,1075 336,1090 341,1125 345,790 348,1000 352,860 354,1020 357,850 361,760 365,880 369,935 373,880 376,915 380,880 383,620 387,790 391,685 395,700 399,795 403,755 406,775 410,520 414,655 418,620 421,670 424,340 428,235 432,330 436,520 439,450 442,455 447,460 449,690 453,720 458,785 462,780 466,740 468,700 470,740 473,550 476,600 479,730 483,755 487,760 490,810 494,835 497,970 500,900 503,885 507,905 510,890 514,905 517,1100 520,1240 523,1170 527,1190 531,1140 535,1020 540,1110 544,1190 547,1130 550,1165 554,1080 558,830 562,840 567,860';
const mean = '22,1330 26,1400 32,1480 40,1510 47,1480 53,1420 70,1412 85,1398 100,1393 115,1365 130,1340 145,1325 157,1328 170,1345 230,1345 260,1338 300,1330 320,1308 345,1298 360,1265 378,1240 395,1215 415,1185 428,1150 440,1125 460,1103 485,1090 515,1080 545,1086 567,1083';
const trace = (s, c) => el(d, 'polyline', { points: s.split(' ').map(p => { const [x, y] = p.split(',').map(Number); return `${(2100 + x / 3).toFixed(1)},${(430 + y / 3).toFixed(1)}`; }).join(' '), fill: 'none', stroke: c });
trace(price, '#fff');
trace(mean, '#ff0');
const vols = [276,143,85,147,120,118,75,107,65,60,69,40,50,45,32,38,36,130,35,32,55,63,62,18,20,50,45,38,35,30,45,48,40,15,22,28,32,36,45,15,20,48,71,70,40,40,97,102,62,54,53,35,42,18,15,20,20,16,24,14,13,14,10,8,10,22,8,28,30,8,14,20,28,20,12,10,12,20,40,12,10,8,5,10,36,18,15,14,12,10,12,103,35,28,30,115,18,15,30,14,12,10,33,12,8,10,15,20,98,25,76,30,25,95,28,40,30,28,45,96,62,52,30,25,42,45,30,28,40,97,40,25,30,45,86,125,28,68,25,66,22,18,50,45,35,68,33,28,42,30,36,50,45,52,30,35,50,48,35,28,45,30,25,18,45,40,55,95,85,30,28,44,25,35,40,70,60,80,60,50,40,128];
vols.forEach((h, i) => el(d, 'rect', { x: 2107 + i, y: 1329 - h, width: 1, height: h, fill: '#c0c000' }));

/* quarterly profit */
const q = document.getElementById('profit');
['1.78', '1.34', '0.89', '0.45', '0.00'].forEach((t, i) => label(q, 2381, 95 + Math.round(i * 18.75), t, '#ccc', 12, 'end'));
label(q, 2544, 96, '净利润(亿)', '#ccc', 12, 'end');
seg(q, 2383.5, 92, 2383.5, 166, '#444');
seg(q, 2383, 166.5, 2544, 166.5, '#444');
[[2394, 154], [2402, 141], [2410, 140], [2418, 162], [2448, 150], [2456, 135], [2464, 120], [2472, 99], [2501, 121]].forEach(([x, y]) =>
  el(q, 'rect', { x: x + .5, y, width: 6, height: 165 - y, fill: y === 162 ? '#00e600' : '#ff3c00' }));
[['2020', 2410], ['2021', 2462], ['2022', 2515]].forEach(([t, x]) => label(q, x, 180, t, '#ccc', 12, 'middle'));

/* index strip */
const idx = [['上证', '3284.83', '45.88', '1.42%', '5042亿'], ['深证', '12035.2', '224.57', '1.90%', '5463亿'], ['沪深', '4238.99', '63.32', '1.52%', '3241亿'], ['创业', '2556.47', '56.26', '2.25%', '1739亿'], ['科创', '1102.85', '21.68', '2.01%', '598.1亿']];
const block = x => `<path d="M${x} 6h15M${x + 30} 6h15" stroke="#fff" stroke-width="6"/><path d="M${x + 14} 6h11" stroke="#f00000" stroke-width="6"/><path d="M${x + 25} 6h8" stroke="#008000" stroke-width="6"/><path d="M${x} 12h47M${x} 16h47" stroke="#f00000" stroke-width="2" stroke-dasharray="6 2"/>`;
document.getElementById('status').innerHTML = idx.map(r =>
  `<span class="mk">${r.map((v, i) => `<span class="${i > 0 && i < 4 ? 'r' : ''}">${v}</span>`).join('')}</span>`).join('') +
  `<svg width="100" height="18" viewBox="0 0 100 18">${block(1)}${block(53)}</svg><span class="site">深圳双线主站5</span>`;
```
